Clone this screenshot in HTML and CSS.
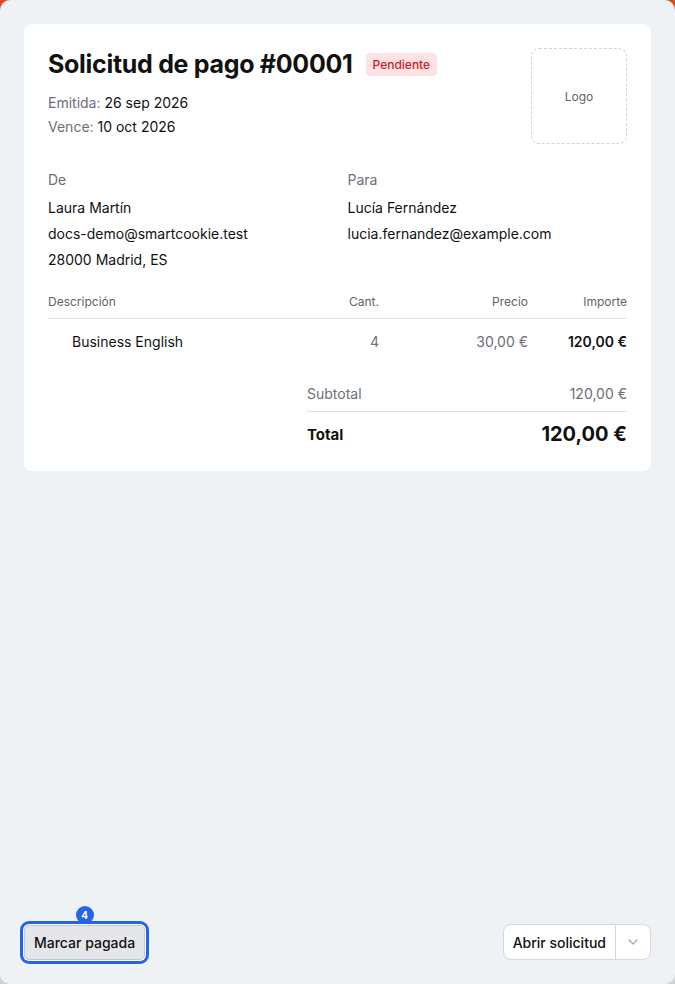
FILE: index.html
```html
<!DOCTYPE html>
<html lang="es">
<head>
  <meta charset="UTF-8" />
  <meta name="viewport" content="width=device-width, initial-scale=1" />
  <title>Solicitud de pago #00001</title>
  <link rel="stylesheet" href="styles.css">
</head>
<body>
  <div class="app">
    <main class="card">
      <div class="head">
        <div>
          <div class="title-row">
            <h1>Solicitud de pago #00001</h1>
            <span class="status">Pendiente</span>
          </div>
          <p class="meta"><span class="muted">Emitida:</span> 26 sep 2026</p>
          <p class="meta"><span class="muted">Vence:</span> 10 oct 2026</p>
        </div>
        <div class="logo">Logo</div>
      </div>

      <div class="parties">
        <div>
          <p class="muted label">De</p>
          <p>Laura Martín</p>
          <p>docs-demo@smartcookie.test</p>
          <p>28000 Madrid, ES</p>
        </div>
        <div>
          <p class="muted label">Para</p>
          <p>Lucía Fernández</p>
          <p>lucia.fernandez@example.com</p>
        </div>
      </div>

      <div class="items">
        <div class="row head-row">
          <span>Descripción</span>
          <span class="num">Cant.</span>
          <span class="num">Precio</span>
          <span class="num">Importe</span>
        </div>
        <div class="row item">
          <span class="desc">Business English</span>
          <span class="num muted">4</span>
          <span class="num muted">30,00 €</span>
          <span class="num strong">120,00 €</span>
        </div>
      </div>

      <div class="totals">
        <div class="sub"><span>Subtotal</span><span>120,00 €</span></div>
        <div class="total"><span>Total</span><span class="big">120,00 €</span></div>
      </div>
    </main>

    <footer class="actions">
      <div class="focus-wrap">
        <span class="step">4</span>
        <button class="btn-grey">Marcar pagada</button>
      </div>
      <div class="split">
        <button class="split-main">Abrir solicitud</button>
        <button class="split-arrow">
          <svg width="10" height="6" viewBox="0 0 10 6"><path d="M1 1l4 4 4-4" fill="none" stroke="#9ca3af" stroke-width="1.2" stroke-linecap="round" stroke-linejoin="round"/></svg>
        </button>
      </div>
    </footer>
  </div>
</body>
</html>
```

FILE: styles.css
```css
html {
  background: linear-gradient(#d94c1f 50%, #cfd2d6 50%);
}
body {
  margin: 0; font-family: Inter, "Noto Sans", sans-serif; color: #111;
  font-size: 14px;
}
p { margin: 0; }
.app {
  height: 984px; box-sizing: border-box; background: #eff2f5;
  border-radius: 10px; padding: 24px 24px 24px;
  display: flex; flex-direction: column;
}
.card {
  background: #fff; border-radius: 8px; padding: 24px 24px 25px;
}
.head {
  display: flex; justify-content: space-between; align-items: flex-start;
}
.title-row {
  display: flex; align-items: center; gap: 13px; margin: 0 0 11px;
}
h1 {
  margin: 0; font-size: 25px; font-weight: 700; letter-spacing: -0.3px; line-height: 32px;
}
.status {
  background: #fde2e3; color: #c81e2a; font-size: 12px; font-weight: 500;
  padding: 4px 7px; border-radius: 4px; line-height: 15px;
}
.meta { line-height: 24px; }
.muted { color: #6b7079; }
.logo {
  width: 96px; height: 96px; box-sizing: border-box;
  border: 1px dashed #cfd2d6; border-radius: 8px;
  display: flex; align-items: center; justify-content: center;
  color: #5f636a; font-size: 12px;
}
.parties {
  display: grid; grid-template-columns: 1fr 1fr; gap: 20px;
  margin-top: 23px;
}
.parties p { line-height: 26px; }
.parties .label { margin-bottom: 2px; }
.items { margin-top: 21px; }
.row {
  display: grid; grid-template-columns: 1fr 80px 149px 99px; align-items: center;
}
.head-row {
  font-size: 12px; color: #5f636a; padding-bottom: 9px;
  border-bottom: 1px solid #dcdfe3;
}
.item { padding: 14px 0; }
.desc { padding-left: 24px; }
.num { text-align: right; }
.strong { font-weight: 600; }
.totals {
  margin: 21px 0 0 auto; width: 320px;
}
.totals > div {
  display: flex; justify-content: space-between; align-items: center;
}
.sub {
  color: #6b7079; padding-bottom: 9px; border-bottom: 1px solid #dcdfe3;
}
.total { padding-top: 10px; font-weight: 700; font-size: 15px; }
.total .big { font-size: 20px; }
.actions {
  margin-top: auto; display: flex; justify-content: space-between; align-items: flex-end;
}
.focus-wrap { position: relative; }
.step {
  position: absolute; top: -19px; left: 50%; transform: translateX(-50%);
  width: 18px; height: 18px; border-radius: 50%; background: #2563eb;
  color: #fff; font-size: 10px; font-weight: 700;
  display: flex; align-items: center; justify-content: center;
}
button {
  font-family: inherit; font-size: 14px; color: #111; cursor: pointer;
}
.btn-grey {
  background: #e4e6e9; border: 1px solid #c6c9ce; border-radius: 5px;
  height: 35px; padding: 0 9px; font-weight: 500;
  box-shadow: 0 0 0 1px #fff, 0 0 0 4px #2563eb;
  display: block;
}
.split {
  display: flex; background: #fff; border: 1px solid #d4d7dc; border-radius: 8px;
  height: 36px; box-sizing: border-box;
}
.split button { background: none; border: none; }
.split-main { padding: 0 9px; font-weight: 500; border-right: 1px solid #d4d7dc !important; }
.split-arrow { width: 34px; display: flex; align-items: center; justify-content: center; }
```
